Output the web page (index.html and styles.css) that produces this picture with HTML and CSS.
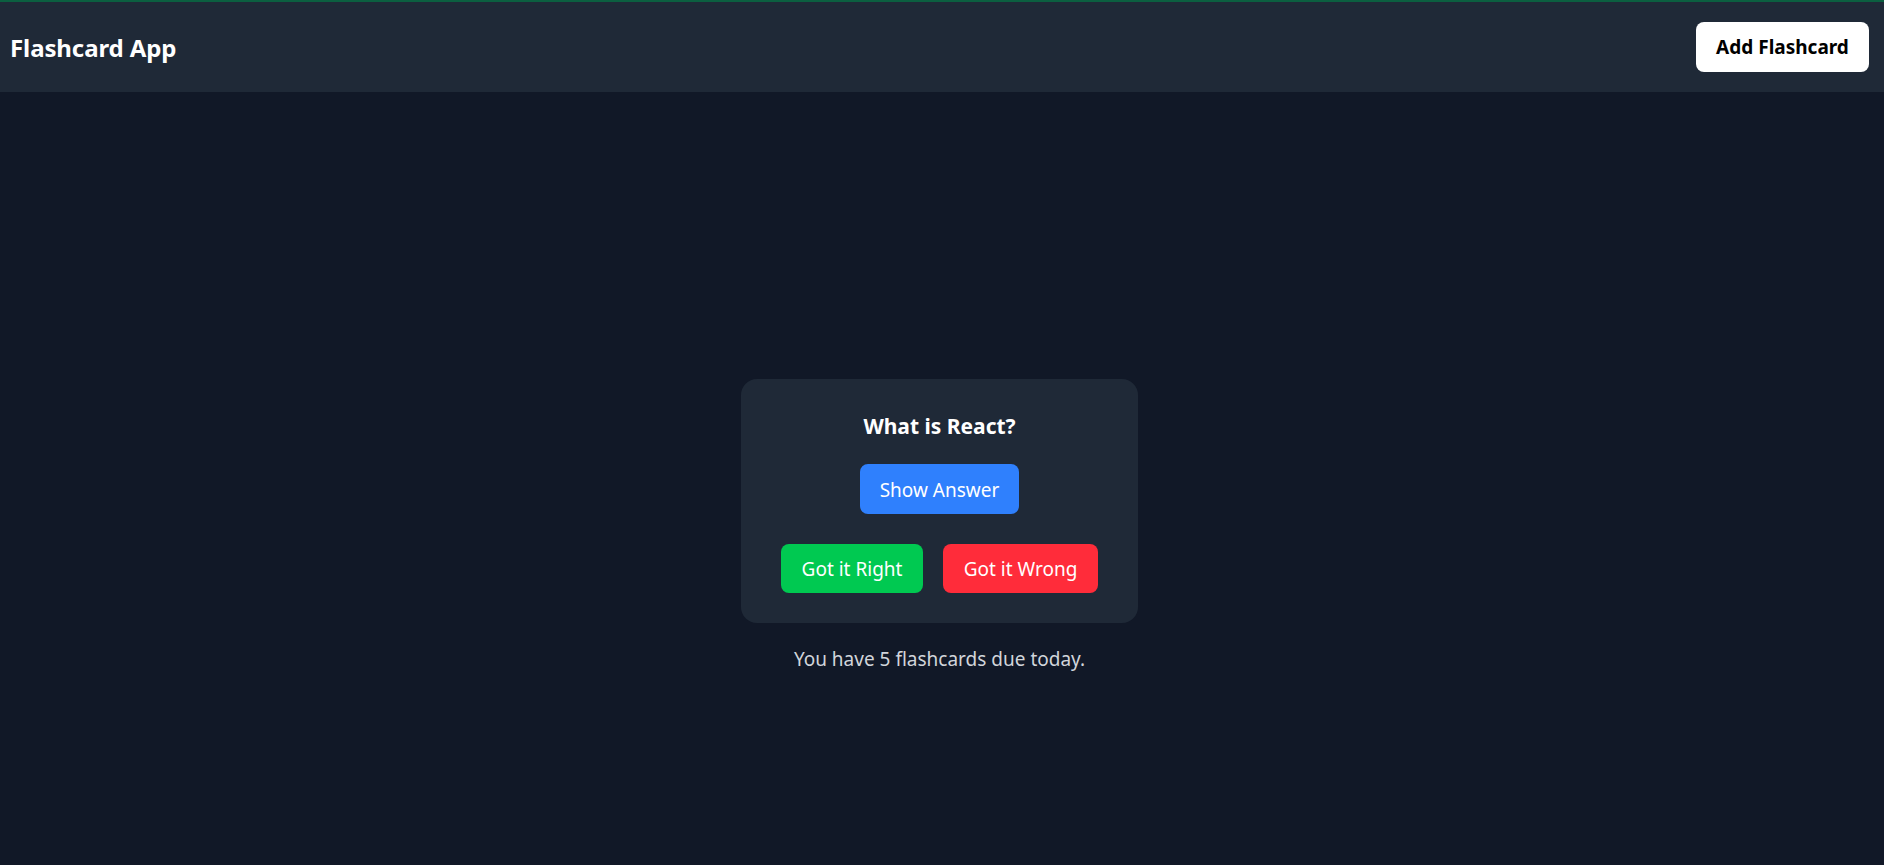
FILE: index.html
```html
<!DOCTYPE html>
<html lang="en">
<head>
<meta charset="utf-8">
<title>Flashcard App</title>
<link rel="stylesheet" href="styles.css">
</head>
<body>
<header class="topbar">
  <h1 class="brand">Flashcard App</h1>
  <button class="add-btn">Add Flashcard</button>
</header>
<main class="main">
  <section class="card">
    <h2 class="question">What is React?</h2>
    <button class="btn btn-blue">Show Answer</button>
    <div class="actions">
      <button class="btn btn-green">Got it Right</button>
      <button class="btn btn-red">Got it Wrong</button>
    </div>
  </section>
  <p class="due">You have 5 flashcards due today.</p>
</main>
</body>
</html>
```

FILE: styles.css
```css
* { box-sizing: border-box; }
html, body { margin: 0; padding: 0; }
body {
  background: #111827;
  color: #fff;
  font-family: "Noto Sans", "Open Sans", sans-serif;
  overflow: hidden;
}
.topbar {
  height: 92px;
  background: #1f2937;
  border-top: 2px solid #0b5f40;
  display: flex;
  align-items: center;
  justify-content: space-between;
  padding: 0 15px 0 10px;
}
.brand {
  margin: 0;
  font-size: 24px;
  font-weight: 700;
  letter-spacing: -0.1px;
}
.add-btn {
  width: 173px;
  height: 50px;
  border: none;
  border-radius: 8px;
  background: #fff;
  color: #000;
  font-family: inherit;
  font-size: 19px;
  font-weight: 700;
}
.main {
  height: calc(100vh - 92px);
  padding: 94px 5px 0 0;
  display: flex;
  flex-direction: column;
  align-items: center;
  justify-content: center;
}
.card {
  width: 397px;
  height: 244px;
  background: #1f2937;
  border-radius: 16px;
  padding: 33px 40px 30px;
  display: flex;
  flex-direction: column;
  align-items: center;
}
.question {
  margin: 0 0 24px;
  font-size: 21px;
  line-height: 28px;
  font-weight: 700;
}
.btn {
  height: 50px;
  border: none;
  border-radius: 8px;
  color: #fff;
  font-family: inherit;
  font-size: 19px;
  padding: 2px 0 0;
}
.btn-blue { width: 159px; background: #2f80fd; }
.actions {
  display: flex;
  gap: 20px;
  margin-top: 30px;
}
.btn-green { width: 142px; height: 49px; background: #00c951; }
.btn-red { width: 155px; height: 49px; background: #ff2c3a; }
.due {
  margin: 22px 0 0;
  font-size: 19px;
  line-height: 28px;
  color: #d1d5db;
}
```
